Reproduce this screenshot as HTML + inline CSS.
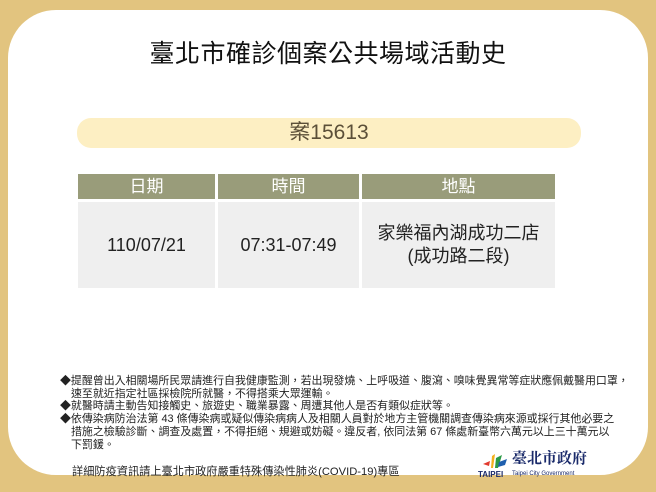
<!DOCTYPE html>
<html><head><meta charset="utf-8"><style>
*{margin:0;padding:0;box-sizing:border-box}
body{width:656px;height:492px;background:#e2c47f;position:relative;overflow:hidden;font-family:"Liberation Sans","Noto Sans CJK TC",sans-serif}
.card{position:absolute;left:8px;top:10px;width:640px;height:465px;background:#fff;border-radius:48px}
.abs{position:absolute}
.title{left:0;width:656px;top:34px;text-align:center;font-size:25px;color:#111;letter-spacing:0.5px}
.pill{left:77px;top:118px;width:504px;height:30px;background:#fdefc3;border-radius:14px;text-align:center;font-size:21px;line-height:30px;color:#5b4f38}
.h{top:174px;height:25px;background:#999c7a;color:#fff;text-align:center;font-size:17px;line-height:25px}
.d{top:202px;height:86px;background:#efefef;color:#222;font-size:18px;display:flex;align-items:center;justify-content:center;text-align:center;line-height:23px}
.notes{left:60px;top:375px;width:600px;font-size:10.95px;line-height:12.7px;color:#222;white-space:nowrap}
.notes p{padding-left:11px;text-indent:-11px}
.foot{left:72px;top:463px;font-size:11.2px;color:#222}
</style></head><body>
<div class="card"></div>
<div class="abs title">臺北市確診個案公共場域活動史</div>
<div class="abs pill">案15613</div>
<div class="abs h" style="left:78px;width:137px">日期</div>
<div class="abs h" style="left:218px;width:141px">時間</div>
<div class="abs h" style="left:362px;width:193px">地點</div>
<div class="abs d" style="left:78px;width:137px">110/07/21</div>
<div class="abs d" style="left:218px;width:141px">07:31-07:49</div>
<div class="abs d" style="left:362px;width:193px">家樂福內湖成功二店<br>(成功路二段)</div>
<div class="abs notes">
<p>◆提醒曾出入相關場所民眾請進行自我健康監測，若出現發燒、上呼吸道、腹瀉、嗅味覺異常等症狀應佩戴醫用口罩，<br>速至就近指定社區採檢院所就醫，不得搭乘大眾運輸。</p>
<p>◆就醫時請主動告知接觸史、旅遊史、職業暴露、周遭其他人是否有類似症狀等。</p>
<p>◆依傳染病防治法第 43 條傳染病或疑似傳染病病人及相關人員對於地方主管機關調查傳染病來源或採行其他必要之<br>措施之檢驗診斷、調查及處置，不得拒絕、規避或妨礙。違反者, 依同法第 67 條處新臺幣六萬元以上三十萬元以<br>下罰鍰。</p>
</div>
<div class="abs foot">詳細防疫資訊請上臺北市政府嚴重特殊傳染性肺炎(COVID-19)專區</div>
<svg class="abs" style="left:480px;top:452px" width="30" height="20" viewBox="0 0 30 20">
<path d="M3 12 L10 9 L9 14Z" fill="#e23a2e"/><path d="M12 4 L15 2 L13 16 L11 16Z" fill="#f2b01e"/><path d="M16 6 L22 3 L18 16 L15 16Z" fill="#2a9a47"/><path d="M19 10 L27 7 L25 13 L18 15Z" fill="#1f5fae"/>
</svg>
<div class="abs" style="left:478px;top:470px;font-size:8px;font-weight:bold;color:#1a2a6a">TAIPEI</div>
<div class="abs" style="left:512px;top:447px;font-size:15px;font-weight:bold;color:#1a2a6a;font-family:'Noto Serif CJK SC',serif">臺北市政府</div>
<div class="abs" style="left:512px;top:471px;font-size:6px;color:#1a2a6a">Taipei City Government</div>
</body></html>
